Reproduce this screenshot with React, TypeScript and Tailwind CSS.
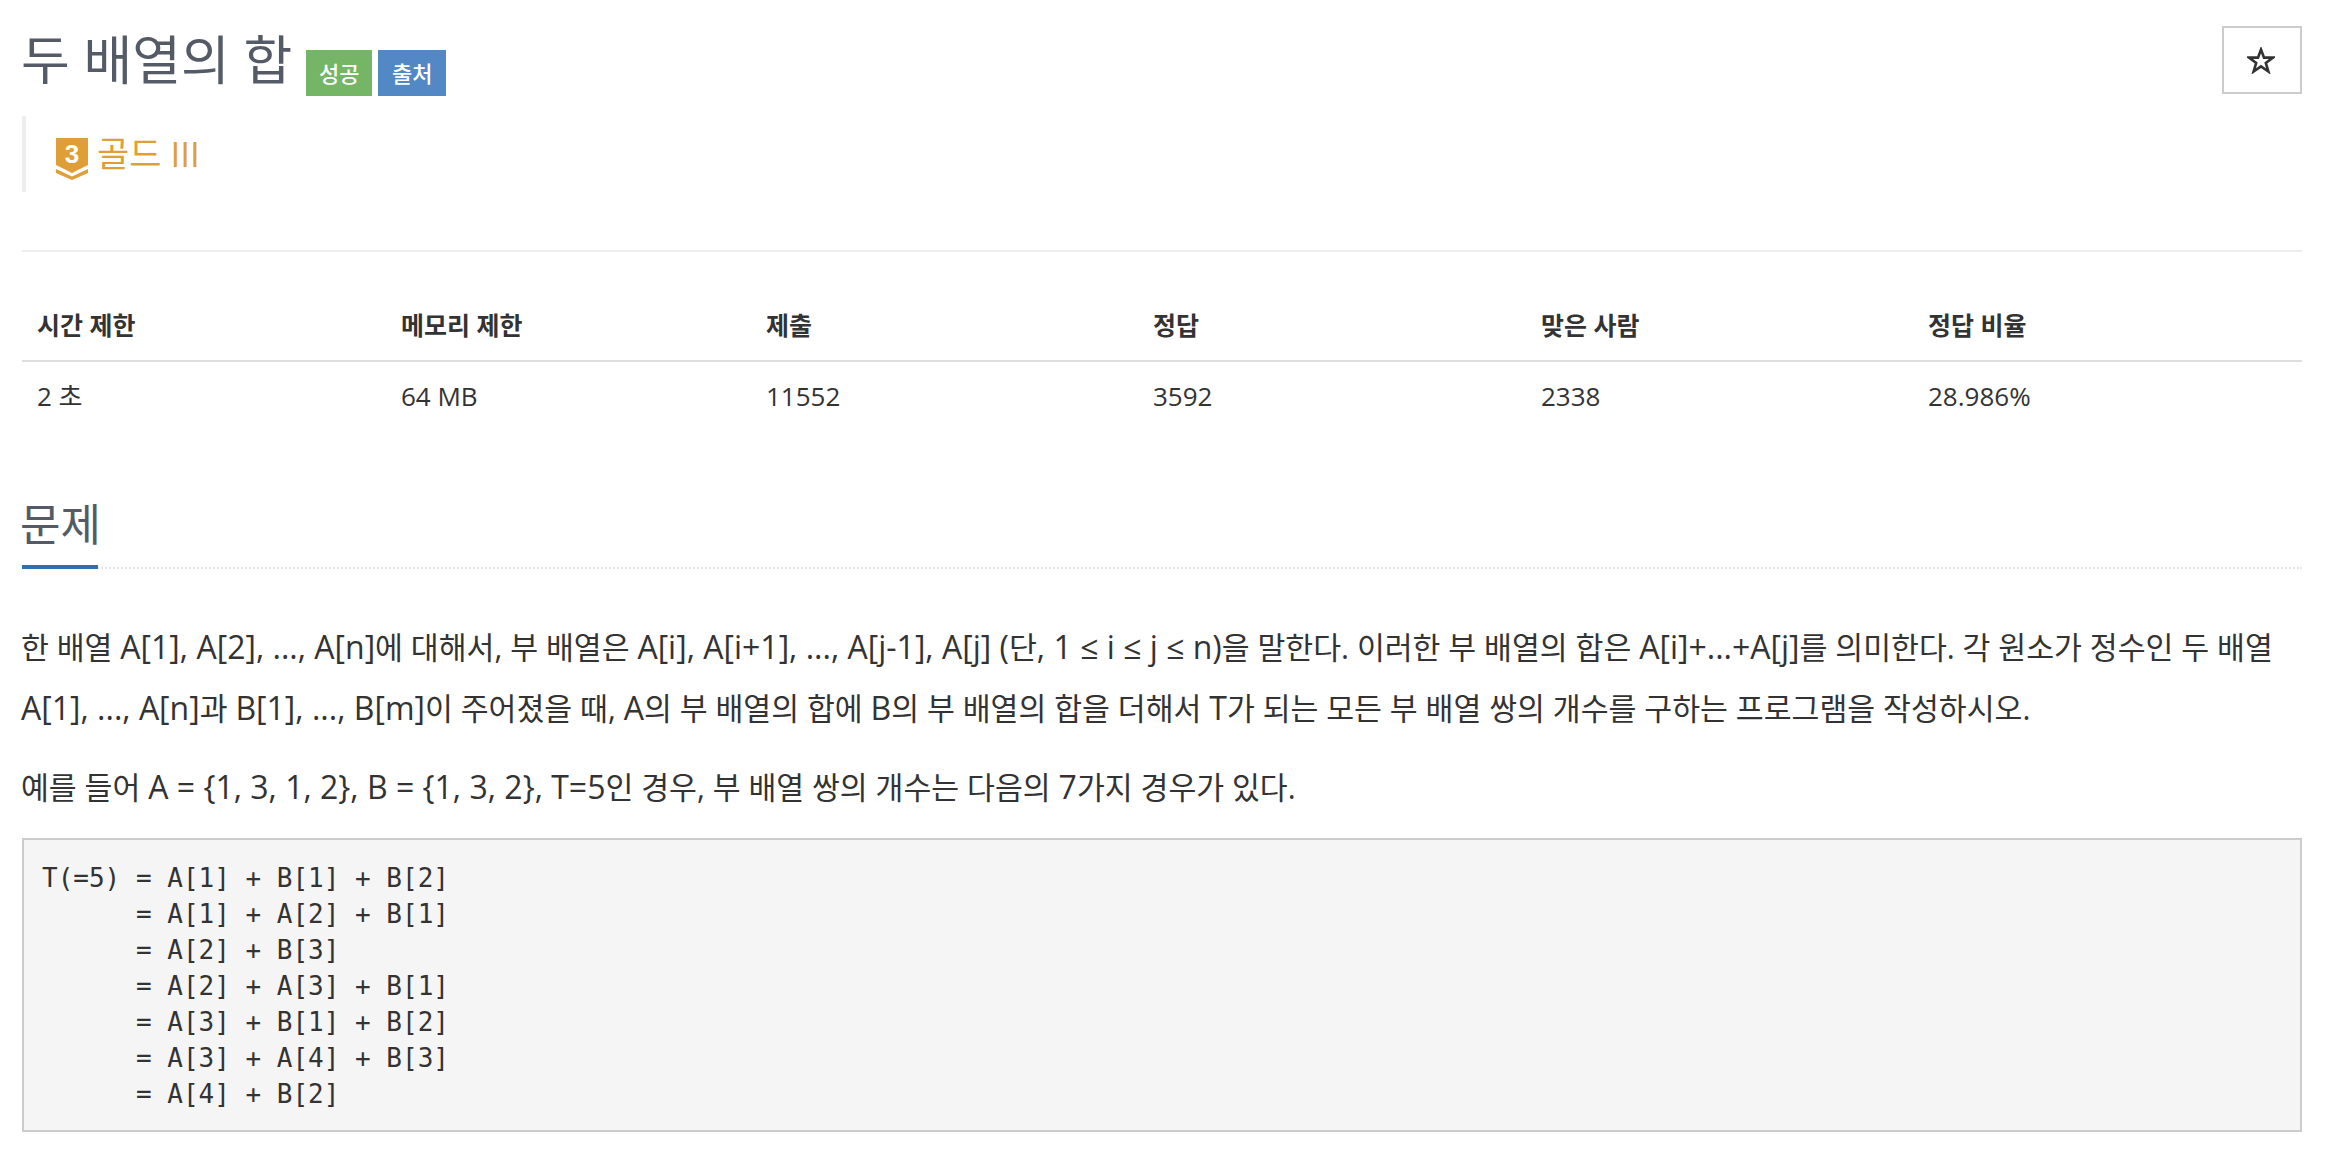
import type { ReactNode } from "react";

const font = "font-['Open_Sans','Noto_Sans_CJK_KR',sans-serif]";

const cols = ["w-[364px]", "w-[365px]", "w-[387px]", "w-[388px]", "w-[387px]", "w-[389px]"];
const heads = ["시간 제한", "메모리 제한", "제출", "정답", "맞은 사람", "정답 비율"];
const vals = ["2 초", "64 MB", "11552", "3592", "2338", "28.986%"];

const pre = `T(=5) = A[1] + B[1] + B[2]
      = A[1] + A[2] + B[1]
      = A[2] + B[3]
      = A[2] + A[3] + B[1]
      = A[3] + B[1] + B[2]
      = A[3] + A[4] + B[3]
      = A[4] + B[2]`;

function L({ children }: { children: ReactNode }) {
  return <span className="text-[32px] leading-none">{children}</span>;
}

function Tier() {
  return (
    <svg width="32" height="42" viewBox="0 0 32 42" className="block">
      <path d="M0 0H32V27L16 35L0 27Z" fill="#e09e37" />
      <path d="M0 31L16 38.5L32 31V35L16 42L0 35Z" fill="#e09e37" />
      <text x="16" y="25" textAnchor="middle" fontSize="26" fontWeight="700" fill="#fff" fontFamily="'Liberation Sans',sans-serif">3</text>
    </svg>
  );
}

export default function App() {
  return (
    <div className={`${font} bg-white text-[#333] h-[1166px] overflow-hidden pl-[22px] pr-[38px]`}>
      <div className="flex items-start justify-between h-[116px]">
        <div className="flex items-start pt-[26px]">
          <h1 className="text-[53px] leading-[66px] font-normal text-[#555b66] -ml-[1px] mt-[1px]">두 배열의 합</h1>
          <span className="ml-[14px] mt-[24px] h-[46px] w-[66px] bg-[#74b566] text-white text-[22px] font-medium flex items-center justify-center">성공</span>
          <span className="ml-[6px] mt-[24px] h-[46px] w-[68px] bg-[#5288c4] text-white text-[22px] font-medium flex items-center justify-center">출처</span>
        </div>
        <div className="mt-[26px] w-[80px] h-[68px] border-2 border-[#ccc] flex items-center justify-center">
          <svg width="28" height="27" viewBox="0 0 28 27" className="-ml-[2px]">
            <path d="M14 2.5L17 10.6H26L18.8 15.9L21.4 24.5L14 19.4L6.6 24.5L9.2 15.9L2 10.6H11Z" fill="none" stroke="#333" strokeWidth="2.6" strokeLinejoin="miter" />
          </svg>
        </div>
      </div>

      <div className="border-l-4 border-[#eee] h-[76px] pl-[30px] flex items-start pt-[22px] gap-[9px]">
        <Tier />
        <span className="text-[35px] leading-[32px] text-[#e09e37]">골드 III</span>
      </div>

      <div className="mt-[58px] border-t-2 border-[#eee]" />

      <div className="mt-[40px] flex h-[70px] border-b-2 border-[#ddd]">
        {heads.map((h, i) => (
          <div key={h} className={`${cols[i]} shrink-0 pl-[15px] pt-[16px] text-[25px] leading-[34px] font-bold text-[#333]`}>{h}</div>
        ))}
      </div>
      <div className="flex h-[66px]">
        {vals.map((v, i) => (
          <div key={v} className={`${cols[i]} shrink-0 pl-[15px] pt-[17px] text-[26px] leading-[34px] text-[#333]`}>{v}</div>
        ))}
      </div>

      <div className="mt-[69px] flex flex-col">
        <h2 className="text-[44px] leading-[54px] font-normal text-[#555b66] h-[68px] -ml-[2px]">문제</h2>
        <div className="flex h-[4px] border-b-2 border-dotted border-[#e5e5e5]">
          <div className="w-[76px] h-[4px] bg-[#2f6fb4] shrink-0" />
        </div>
      </div>

      <p className="mt-[48px] text-[30.3px] leading-[61px] text-[#333] -ml-[1px]">
        한 배열 <L>A[1], A[2], ..., A[n]</L>에 대해서, 부 배열은 <L>A[i], A[i+1], ..., A[j-1], A[j] (</L>단<L>, 1 ≤ i ≤ j ≤ n)</L>을 말한다. 이러한 부 배열의 합은 <L>A[i]+...+A[j]</L>를 의미한다. 각 원소가 정수인 두 배열 <L>A[1], ..., A[n]</L>과 <L>B[1], ..., B[m]</L>이 주어졌을 때, <L>A</L>의 부 배열의 합에 <L>B</L>의 부 배열의 합을 더해서 <L>T</L>가 되는 모든 부 배열 쌍의 개수를 구하는 프로그램을 작성하시오.
      </p>
      <p className="mt-[19px] text-[30.3px] leading-[60px] text-[#333] -ml-[1px]">
        예를 들어 <L>A = {"{"}1, 3, 1, 2{"}"}, B = {"{"}1, 3, 2{"}"}, T=5</L>인 경우, 부 배열 쌍의 개수는 다음의 <L>7</L>가지 경우가 있다.
      </p>
      <pre className="mt-[20px] h-[294px] border-2 border-[#ccc] bg-[#f5f5f5] pl-[18px] pt-[20px] font-['DejaVu_Sans_Mono',monospace] text-[26px] leading-[36px] text-[#333]">{pre}</pre>
    </div>
  );
}
